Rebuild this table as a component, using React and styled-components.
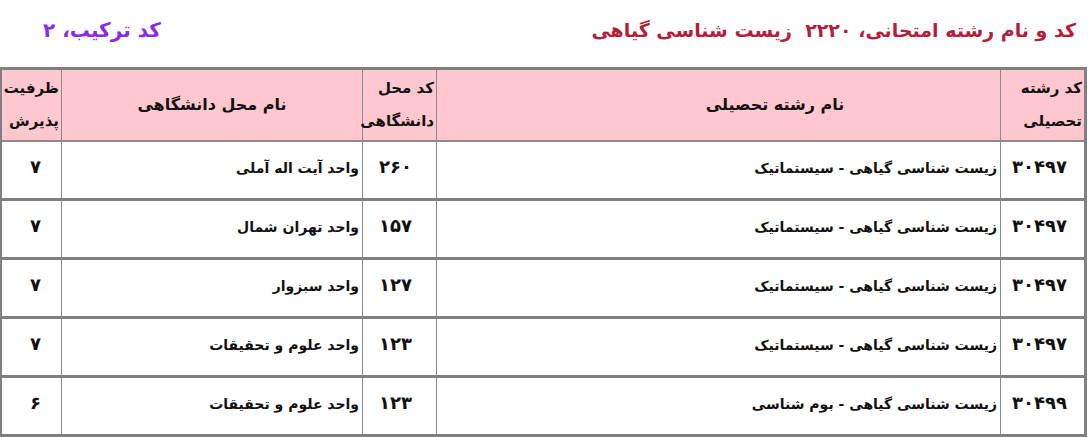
import React from "react";
import styled, { createGlobalStyle } from "styled-components";

const Global = createGlobalStyle`
  html, body { margin: 0; padding: 0; background: #ffffff; }
  body { font-family: "DejaVu Sans", "Noto Sans", sans-serif; }
`;

const Page = styled.div`
  width: 1088px;
  height: 437px;
  overflow: hidden;
  direction: rtl;
  background: #fff;
`;

const TitleBar = styled.div`
  height: 67px;
  display: flex;
  justify-content: space-between;
  align-items: center;
  padding: 0 12px 8px 43px;
  box-sizing: border-box;
  font-weight: bold;
`;

const MainTitle = styled.div`
  color: #b51d3c;
  font-size: 19px;
  white-space: pre;
`;

const Combo = styled.div`
  color: #8a2be6;
  font-size: 20px;
`;

const Table = styled.table`
  margin: 0 1px 0 2px;
  width: 1085px;
  border-collapse: collapse;
  table-layout: fixed;
  border: 3px solid #808080;
  font-weight: bold;
  color: #111;
`;

const HeadCell = styled.th`
  background: #ffc7ce;
  height: 70px;
  border-left: 1px solid #8a8a8a;
  border-bottom: 2px solid #8a8a8a;
  padding: ${(p) => p.$pad || "0 2px"};
  font-size: ${(p) => (p.$small ? "15px" : "16px")};
  line-height: ${(p) => (p.$small ? "33px" : "1.4")};
  text-align: ${(p) => p.$align || "center"};
  vertical-align: middle;
  &:last-child { border-left: none; }
`;

const Row = styled.tr`
  & td { height: 59px; }
  &:first-child td { height: 58px; }
  & + & td { border-top: 3px solid #808080; }
`;

const Cell = styled.td`
  border-left: 1px solid #8a8a8a;
  padding: ${(p) => p.$pad || "16px 3px 0 3px"};
  box-sizing: border-box;
  vertical-align: top;
  font-size: ${(p) => (p.$num ? "18px" : "14px")};
  line-height: 20px;
  text-align: ${(p) => p.$align || "right"};
  &:last-child { border-left: none; }
`;

const rows = [
  ["۳۰۴۹۷", "زیست شناسی گیاهی - سیستماتیک", "۲۶۰", "واحد آیت اله آملی", "۷"],
  ["۳۰۴۹۷", "زیست شناسی گیاهی - سیستماتیک", "۱۵۷", "واحد تهران شمال", "۷"],
  ["۳۰۴۹۷", "زیست شناسی گیاهی - سیستماتیک", "۱۲۷", "واحد سبزوار", "۷"],
  ["۳۰۴۹۷", "زیست شناسی گیاهی - سیستماتیک", "۱۲۳", "واحد علوم و تحقیقات", "۷"],
  ["۳۰۴۹۹", "زیست شناسی گیاهی - بوم شناسی", "۱۲۳", "واحد علوم و تحقیقات", "۶"],
];

export default function App() {
  return (
    <Page>
      <Global />
      <TitleBar>
        <MainTitle>{"کد و نام رشته امتحانی، ۲۲۲۰  زیست شناسی گیاهی"}</MainTitle>
        <Combo>کد ترکیب، ۲</Combo>
      </TitleBar>
      <Table>
        <colgroup>
          <col style={{ width: "85px" }} />
          <col style={{ width: "564px" }} />
          <col style={{ width: "74px" }} />
          <col style={{ width: "301px" }} />
          <col style={{ width: "61px" }} />
        </colgroup>
        <thead>
          <tr>
            <HeadCell $small $align="right">کد رشته<br />تحصیلی</HeadCell>
            <HeadCell $pad="0 2px 0 115px">نام رشته تحصیلی</HeadCell>
            <HeadCell $small $align="right">کد محل<br />دانشگاهی</HeadCell>
            <HeadCell>نام محل دانشگاهی</HeadCell>
            <HeadCell $small $align="right">ظرفیت<br />پذیرش</HeadCell>
          </tr>
        </thead>
        <tbody>
          {rows.map((r, i) => (
            <Row key={i}>
              <Cell $num $align="center" $pad="15px 6px 0 0">{r[0]}</Cell>
              <Cell>{r[1]}</Cell>
              <Cell $num $align="center" $pad="15px 8px 0 0">{r[2]}</Cell>
              <Cell>{r[3]}</Cell>
              <Cell $num $align="center" $pad="15px 0 0 8px">{r[4]}</Cell>
            </Row>
          ))}
        </tbody>
      </Table>
    </Page>
  );
}
